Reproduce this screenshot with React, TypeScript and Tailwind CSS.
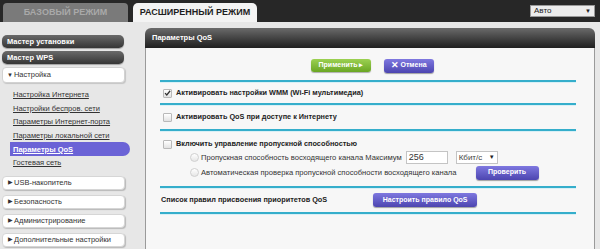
import React from "react";

const subItems = [
  "Настройка Интернета",
  "Настройки беспров. сети",
  "Параметры Интернет-порта",
  "Параметры локальной сети",
  "Параметры QoS",
  "Гостевая сеть",
];

const groups = ["USB-накопитель", "Безопасность", "Администрирование", "Дополнительные настройки"];

const Divider = () => <div className="h-[2px] w-[416px] bg-[#35aecb] shadow-[0_1px_0_#d9f0f6]" />;

const Checkbox = ({ checked }: { checked?: boolean }) => (
  <span className="flex h-[9px] w-[9px] items-center justify-center rounded-[1px] border border-[#b9b9b9] bg-gradient-to-b from-white to-[#e2e2e2]">
    {checked && (
      <svg viewBox="0 0 10 10" className="h-[8px] w-[8px]">
        <path d="M1.5 5.2 L4 7.8 L8.8 1.8" fill="none" stroke="#333" strokeWidth="1.8" />
      </svg>
    )}
  </span>
);

const Radio = () => (
  <span className="h-[9px] w-[9px] rounded-full border border-[#d0d0d0] bg-gradient-to-b from-white to-[#e6e6e6]" />
);

const PurpleButton = ({ children, className = "" }: { children: React.ReactNode; className?: string }) => (
  <button
    className={
      "flex h-[14px] items-center justify-center rounded-[3px] bg-gradient-to-b from-[#7f78e0] to-[#4d45b0] text-[7px] font-bold text-white shadow-[0_1px_1px_rgba(0,0,0,0.35)] " +
      className
    }
  >
    {children}
  </button>
);

export default function App() {
  return (
    <div className="h-[249px] w-[600px] overflow-hidden bg-[#e7e7e7] font-['Liberation_Sans',Arial,sans-serif]">
      {/* top bar */}
      <div className="flex h-[22px] items-end bg-[#272727] pl-[3px]">
        <div className="flex h-[19px] w-[125px] items-center justify-center rounded-t-[4px] bg-[#7a7a7a] text-[9px] font-bold text-[#a9a9a9]">
          БАЗОВЫЙ РЕЖИМ
        </div>
        <div className="ml-[5px] flex h-[19px] w-[124px] items-center justify-center rounded-t-[5px] bg-[#f3f3f3] text-[9px] font-bold text-[#1e1e1e]">
          РАСШИРЕННЫЙ РЕЖИМ
        </div>
        <div className="mb-[5px] ml-auto mr-[5px] flex h-[12px] w-[65px] items-center justify-between border border-[#999] bg-[#ececec] px-[3px] text-[8px] text-[#222]">
          <span>Авто</span>
          <span className="text-[6px]">▼</span>
        </div>
      </div>

      <div className="flex">
        {/* left menu */}
        <div className="flex w-[145px] flex-col pl-[2px] pt-[13px]">
          <div className="flex h-[13px] w-[122px] items-center rounded-[5px] bg-gradient-to-b from-[#6a6a6a] to-[#363636] pl-[5px] text-[7.5px] font-bold text-white shadow-[0_1px_1px_rgba(0,0,0,0.3)]">
            Мастер установки
          </div>
          <div className="mt-[3px] flex h-[13px] w-[122px] items-center rounded-[5px] bg-gradient-to-b from-[#6a6a6a] to-[#363636] pl-[5px] text-[7.5px] font-bold text-white shadow-[0_1px_1px_rgba(0,0,0,0.3)]">
            Мастер WPS
          </div>
          <div className="mt-[3px] flex h-[16px] w-[123px] items-center rounded-[4px] border border-[#d2d2d2] bg-white pl-[4px] text-[7.5px] text-[#333] shadow-[1px_1px_1px_rgba(0,0,0,0.15)]">
            <span className="mr-[1px] text-[6px]">▼</span>Настройка
          </div>
          <div className="mt-[5px] flex flex-col">
            {subItems.map((s) => (
              <div
                key={s}
                className={
                  "flex h-[13.6px] items-center text-[7.5px] underline " +
                  (s === "Параметры QoS"
                    ? "mr-[15px] ml-[8px] rounded-r-[7px] bg-[#6b63d6] pl-[3px] font-bold text-white no-underline"
                    : "ml-[11px] text-[#333]")
                }
              >
                {s}
              </div>
            ))}
          </div>
          <div className="mt-[6px] flex flex-col gap-[5px]">
            {groups.map((g) => (
              <div
                key={g}
                className="flex h-[14px] w-[123px] items-center rounded-[4px] border border-[#d6d6d6] bg-white pl-[5px] text-[7.5px] text-[#333] shadow-[1px_1px_1px_rgba(0,0,0,0.2)]"
              >
                <span className="mr-[1px] text-[6px]">▶</span>
                {g}
              </div>
            ))}
          </div>
        </div>

        {/* main panel */}
        <div className="mt-[6px] flex w-[450px] flex-col">
          <div className="flex h-[20px] items-center rounded-t-[6px] bg-gradient-to-b from-[#6b6b6b] to-[#202020] pl-[7px] text-[7.5px] font-bold text-white">
            Параметры QoS
          </div>
          <div className="flex h-[230px] flex-col border-x border-[#9a9a9a] bg-[#f7f7f7] pl-[14px]">
            <div className="flex h-[32px] items-center gap-[13px] pl-[151px] pt-[3px]">
              <button className="flex h-[13px] w-[60px] items-center justify-center rounded-[3px] bg-gradient-to-b from-[#9cd151] to-[#6aa622] text-[7px] font-bold text-white shadow-[0_1px_1px_rgba(0,0,0,0.3)]">
                Применить ▸
              </button>
              <PurpleButton className="h-[13px] w-[50px]">
                <span className="mr-[1px] text-[9px]">✕</span>Отмена
              </PurpleButton>
            </div>
            <Divider />
            <div className="flex h-[21px] items-center gap-[3px] pl-[3px] pt-[1px] text-[7.3px] font-bold text-[#222]">
              <Checkbox checked />
              <span className="ml-[1px]">Активировать настройки WMM (Wi-Fi мультимедиа)</span>
            </div>
            <Divider />
            <div className="flex h-[24px] items-center gap-[3px] pl-[3px] text-[7.3px] font-bold text-[#222]">
              <Checkbox />
              <span className="ml-[1px]">Активировать QoS при доступе к Интернету</span>
            </div>
            <Divider />
            <div className="flex flex-col pt-[7px] text-[7.6px] text-[#333]">
              <div className="flex h-[12px] items-center gap-[3px] pl-[3px] text-[7.3px] font-bold text-[#222]">
                <Checkbox />
                <span className="ml-[1px]">Включить управление пропускной способностью</span>
              </div>
              <div className="flex h-[15px] items-center gap-[2px] pl-[30px]">
                <Radio />
                <span>Пропускная способность восходящего канала Максимум</span>
                <span className="ml-[2px] flex h-[13px] w-[42px] items-center border border-[#c4c4c4] bg-white pl-[2px] text-[9px] text-[#333]">
                  256
                </span>
                <span className="ml-[6px] flex h-[13px] w-[42px] items-center justify-between border border-[#c4c4c4] bg-white px-[2px] text-[8px] text-[#444]">
                  Кбит/с<span className="text-[6px] text-[#222]">▼</span>
                </span>
              </div>
              <div className="flex h-[15px] items-center gap-[2px] pl-[30px]">
                <Radio />
                <span>Автоматическая проверка пропускной способности восходящего канала</span>
                <PurpleButton className="ml-[17px] w-[63px]">Проверить</PurpleButton>
              </div>
            </div>
            <div className="mt-[6px]">
              <Divider />
            </div>
            <div className="flex h-[24px] items-center pl-[1px] text-[7.3px] font-bold text-[#222]">
              <span>Список правил присвоения приоритетов QoS</span>
              <PurpleButton className="ml-[46px] w-[104px]">Настроить правило QoS</PurpleButton>
            </div>
            <Divider />
          </div>
        </div>
      </div>
    </div>
  );
}
